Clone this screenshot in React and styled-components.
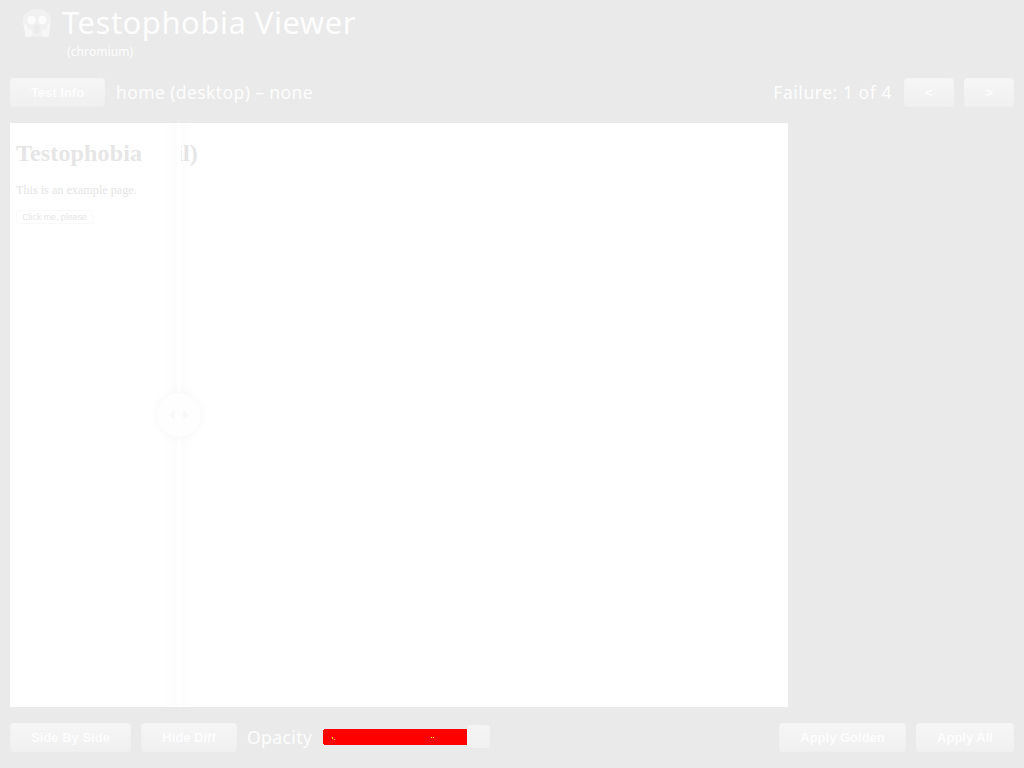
import React from 'react';
import styled, { createGlobalStyle } from 'styled-components';

const GlobalStyle = createGlobalStyle`
  * { box-sizing: border-box; }
  body { margin: 0; background: #eaeaea; overflow: hidden; }
`;

const Page = styled.div`
  width: 1024px;
  height: 768px;
  display: flex;
  flex-direction: column;
  background: #eaeaea;
  color: #fdfdfd;
  font-family: 'Noto Sans', 'Open Sans', sans-serif;
`;

const Header = styled.header`
  height: 78px;
  display: flex;
  padding: 2px 22px 0;
`;

const Logo = styled.svg`
  width: 30px;
  height: 32px;
  margin: 5px 10px 0 0;
`;

const Title = styled.h1`
  margin: 0;
  font-size: 31px;
  line-height: 41px;
  font-weight: 400;
  letter-spacing: 0.5px;
  white-space: nowrap;
`;

const Browser = styled.div`
  margin: 2px 0 0 5px;
  font-size: 12px;
  line-height: 14px;
  letter-spacing: 0.1px;
`;

const Bar = styled.div`
  display: flex;
  align-items: center;
  height: 29px;
  padding: 0 10px;
  gap: 10px;
`;

const Label = styled.span`
  font-size: 17.5px;
  line-height: 28px;
  letter-spacing: ${(p) => p.$spacing || '0.4px'};
  white-space: nowrap;
  margin: -1px ${(p) => p.$after || '0'} 0 ${(p) => p.$before || '0'};
`;

const Spacer = styled.div`
  flex: 1;
`;

const Button = styled.button`
  width: ${(p) => p.$w}px;
  height: 29px;
  flex: none;
  padding: 0;
  border: 0;
  border-radius: 4px;
  background: linear-gradient(#f6f6f6, #f0f0f0);
  box-shadow: inset 0 0 1px #ececec;
  color: #fdfdfd;
  font: bold 13px/28px 'Liberation Sans', Arial, sans-serif;
`;

const Stage = styled.main`
  position: relative;
  width: 778px;
  height: 584px;
  margin: 16px 0 16px 10px;
  padding: 15px 6px;
  background: #fff;
  overflow: hidden;
  font-family: 'Liberation Serif', 'Times New Roman', serif;
`;

const PageHeading = styled.h2`
  display: flex;
  margin: 0;
  font-size: 24px;
  line-height: 30px;
  color: #e6e6e6;
  letter-spacing: 0.15px;
`;

const HeadingTail = styled.span`
  margin-left: 34px;
`;

const Paragraph = styled.p`
  margin: 14px 0 12px;
  font-size: 12.2px;
  line-height: 16px;
  color: #e5e5e5;
`;

const PageButton = styled.button`
  display: block;
  width: 77px;
  height: 14px;
  padding: 0;
  border: 1px solid #f9f9f9;
  border-radius: 3px;
  background: #fff;
  color: #e6e6e6;
  font: 8.8px/13px 'Liberation Sans', Arial, sans-serif;
`;

const Divider = styled.div`
  position: absolute;
  left: 154px;
  top: 0;
  width: 30px;
  height: 100%;
  background: linear-gradient(90deg, #fff 0, #fcfcfc 13px, #fff 13px, #fff 17px, rgba(0, 0, 0, 0.01) 17px, rgba(0, 0, 0, 0) 30px);
`;

const Handle = styled.div`
  position: absolute;
  left: 147px;
  top: 270px;
  width: 44px;
  height: 44px;
  border-radius: 50%;
  background: #fefefe;
  box-shadow: 0 0 10px #f6f6f6;
  display: flex;
  align-items: center;
  justify-content: center;
`;

const Track = styled.div`
  width: 167px;
  height: 24px;
  margin: -2px 0 0 1px;
  display: flex;
  align-items: center;
`;

const Fill = styled.svg`
  width: 144px;
  height: 16px;
  display: block;
`;

const Thumb = styled.div`
  width: 23px;
  height: 23px;
  border-radius: 3px;
  background: linear-gradient(#f5f5f5, #f1f1f1);
  box-shadow: inset 0 0 1px #eaeaea;
`;

function ScreamLogo() {
  return (
    <Logo viewBox="0 0 30 32">
      <path d="M1 15C1 6 7 2 15 2s14 4 14 13c0 6-3 10-6 13-5 2-11 2-16 0-3-3-6-7-6-13z" fill="#f1f1f1" />
      <ellipse cx="9.5" cy="13" rx="4" ry="4.2" fill="#fcfcfc" />
      <ellipse cx="20.5" cy="13" rx="4" ry="4.2" fill="#fcfcfc" />
      <ellipse cx="15" cy="22" rx="3.2" ry="4.5" fill="#ebebeb" />
      <path d="M2 18c0-2 3-2 3 1l1 3c3 0 4 1 4 3v3q0 2-3 2H5q-2 0-2-2v-3c-1-2-1-4-1-7zM28 18c0-2-3-2-3 1l-1 3c-3 0-4 1-4 3v3q0 2 3 2h2q2 0 2-2v-3c1-2 1-4 1-7z" fill="#f7f7f7" />
    </Logo>
  );
}

export default function App() {
  return (
    <>
      <GlobalStyle />
      <Page>
        <Header>
          <ScreamLogo />
          <div>
            <Title>Testophobia Viewer</Title>
            <Browser>(chromium)</Browser>
          </div>
        </Header>
        <Bar>
          <Button $w={95}>Test Info</Button>
          <Label $before="1px">home (desktop) – none</Label>
          <Spacer />
          <Label $after="2px" $spacing="0.55px">Failure: 1 of 4</Label>
          <Button $w={50}>&lt;</Button>
          <Button $w={50}>&gt;</Button>
        </Bar>
        <Stage>
          <PageHeading>
            Testophobia
            <HeadingTail>il)</HeadingTail>
          </PageHeading>
          <Paragraph>This is an example page.</Paragraph>
          <PageButton>Click me, please</PageButton>
          <Divider />
          <Handle>
            <svg width="22" height="12" viewBox="0 0 22 12" fill="#f9f9f9">
              <path d="M7 1v10L1 6zM15 1v10l6-5z" />
            </svg>
          </Handle>
        </Stage>
        <Bar>
          <Button $w={121}>Side By Side</Button>
          <Button $w={96}>Hide Diff</Button>
          <Label>Opacity</Label>
          <Track>
            <Fill viewBox="0 0 144 16" shapeRendering="crispEdges">
              <path d="M1 0h143v16H1v-1H0V1h1z" fill="#f00" />
              <path d="M9 8h1v2H9zM11 10h1v1h-1zM108 8h1v1h-1zM110 8h1v1h-1z" fill="#ff0" />
            </Fill>
            <Thumb />
          </Track>
          <Spacer />
          <Button $w={127}>Apply Golden</Button>
          <Button $w={98}>Apply All</Button>
        </Bar>
      </Page>
    </>
  );
}
